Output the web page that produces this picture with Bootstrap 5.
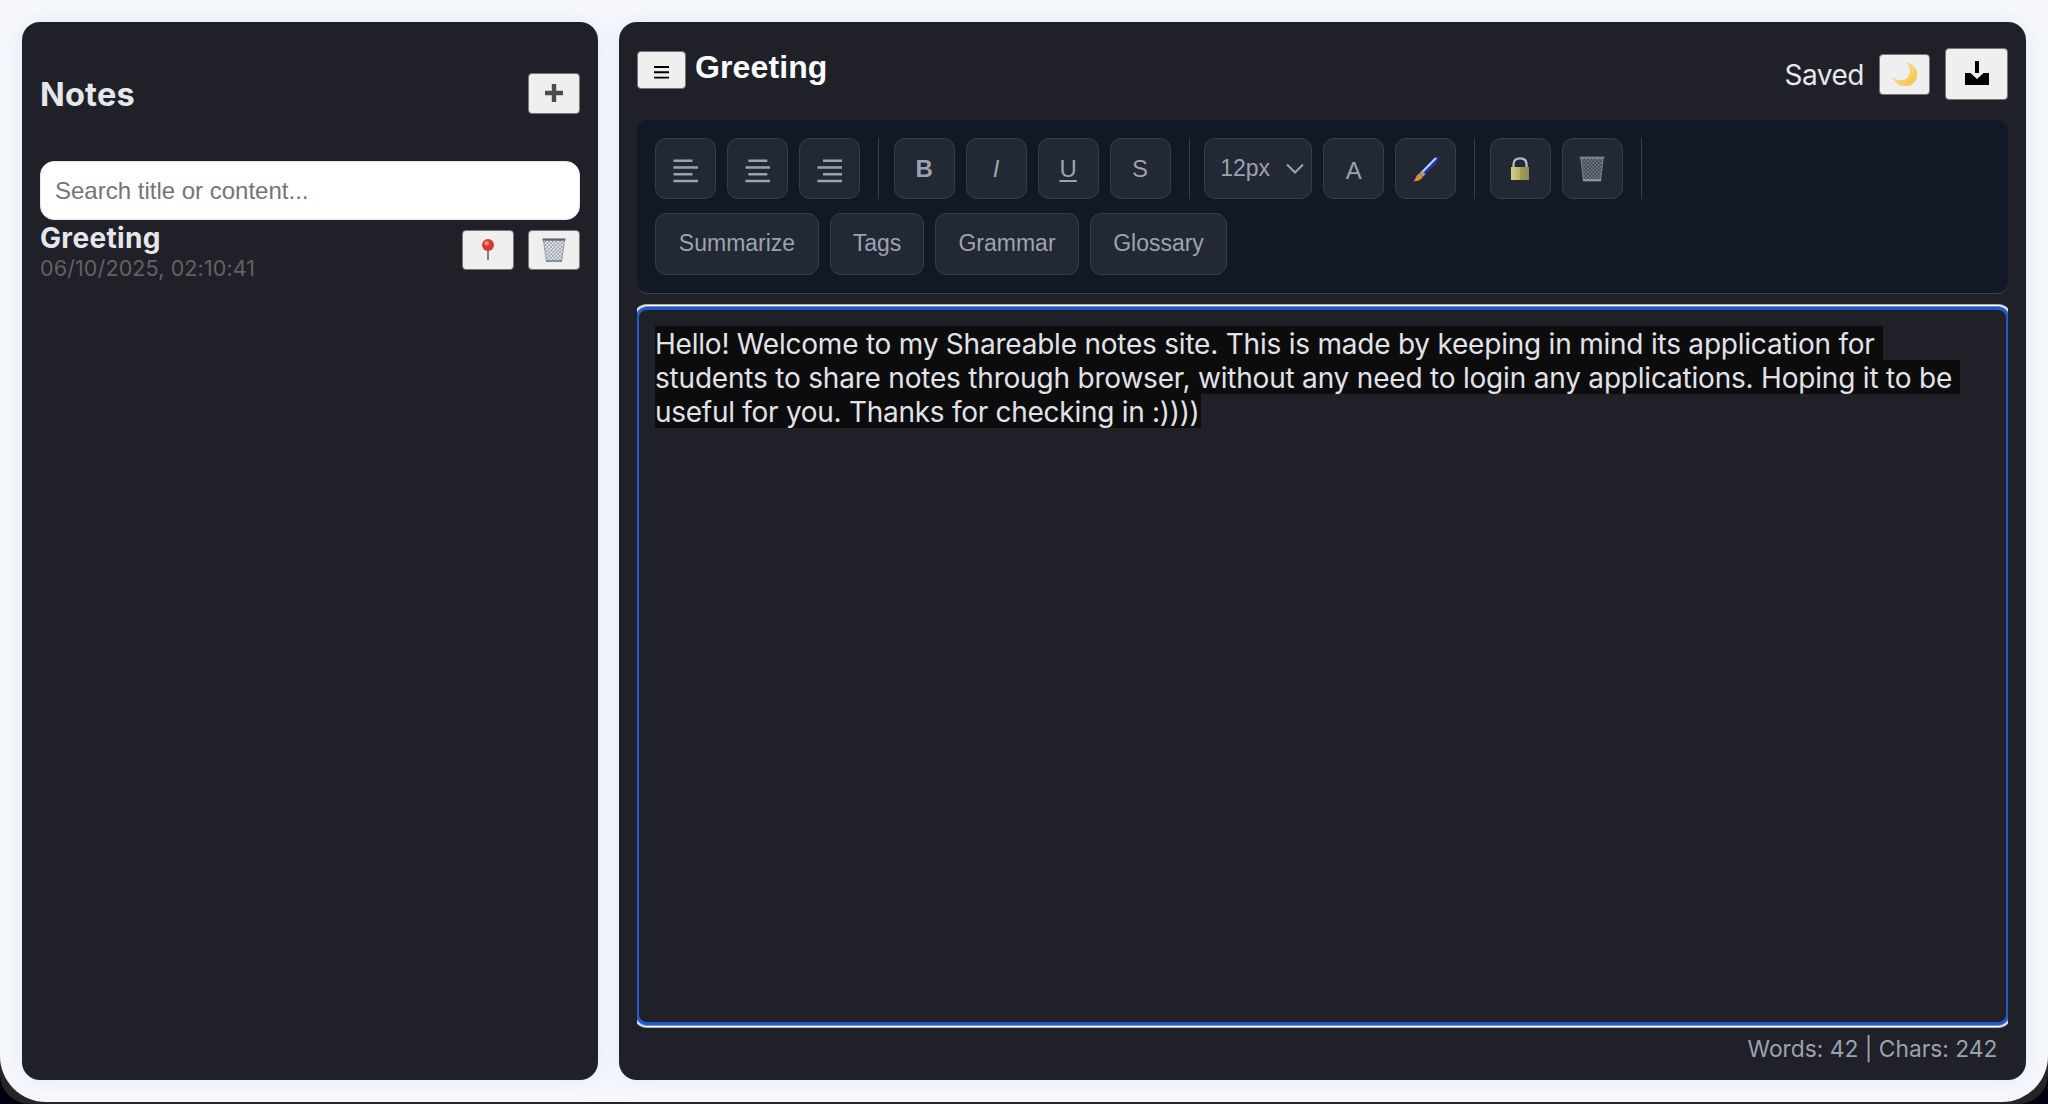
<!DOCTYPE html>
<html lang="en">
<head>
<meta charset="utf-8">
<title>Notes</title>
<link rel="stylesheet" href="https://cdn.jsdelivr.net/npm/bootstrap@5.3.0/dist/css/bootstrap.min.css">
<style>
html{background:#05000f}
body{height:1104px;margin:0;background:#242625;border-radius:0 0 30px 30px;font-family:Inter,"Liberation Sans",sans-serif;color:#e5e7eb;overflow:hidden}
svg{display:block;flex:none}
.screen{height:1102px;padding:22px;gap:21px;background:#f7f8fc;border-radius:0 0 46px 46px}
.panel{background:#202028;border-radius:18px;box-shadow:0 0 22px rgba(90,130,230,.13)}
.side{width:576px;padding:0 18px}
.main-pane{padding:18px 18px 0;min-width:0}
.arial{font-family:"Liberation Sans",Arial,sans-serif}
.side-head{height:139px;padding-top:51px}
.side-head h2{font-size:32.5px;font-weight:700;line-height:43px;letter-spacing:.2px;margin:0}
.plain{display:flex;align-items:center;justify-content:center;background:#efefef;border:1.5px solid #767676;border-radius:4px;padding:0;color:#000}
.b-add{width:52px;height:41px}
.b-item{width:52px;height:40px;margin-top:10px}
.b-menu{width:48.5px;height:38px;margin-top:11px}
.b-moon{width:51px;height:41px}
.b-save{width:63px;height:52px}
.search{height:59px;border:1px solid #e5e7eb;border-radius:14px;padding:0 14px;font-size:24px;background:#fff;width:100%;display:block}
.search::placeholder{color:#757575;opacity:1}
.note-title{font-size:28px;font-weight:700;line-height:34px;letter-spacing:.35px;margin-top:1px}
.note-date{font-size:21.5px;line-height:26px;letter-spacing:.12px;color:#626262}
.item-actions{gap:14px}
.head{height:80px}
.doc-title{font-size:32px;font-weight:700;line-height:36px;letter-spacing:.12px;color:#fff;margin:9px 0 0 9.5px}
.head-right{gap:15px;height:52px;margin-top:8px}
.saved{font-size:28px;line-height:34px;letter-spacing:-.5px;padding-top:2px}
.tools{height:174px;padding:18px;background:#121826;border-bottom:1px solid #3b424d;border-radius:11px;column-gap:11px;row-gap:14px;align-content:flex-start}
.tool{height:61px;width:61px;border:1px solid #373e4b;border-radius:11px;background:#222834;color:#9ca3af;font-size:24px;display:flex;align-items:center;justify-content:center;padding:0}
.tool u{text-underline-offset:3px;text-decoration-thickness:2px}
.tool-size{width:108px;font-size:23px;justify-content:space-between;padding:0 7px 0 15px}
.tool-word{height:62px;font-size:23px;padding:0 0 1px}
.w-sum{width:164px}
.w-tag{width:94px}
.w-gra{width:144px}
.w-glo{width:137px}
.rule-v{width:1px;height:61px;background:#373e4b;margin:0 3.6px 0 7px}
.break-line{width:160px}
.ed-clip{margin-top:10px;height:724px;overflow:hidden}
.ed{height:718px;margin:3px -1px;border:3px solid #2359c6;border-radius:11px;box-shadow:0 0 0 1px #6c90dc,0 0 0 2px #fff,0 0 0 3px #b3afb5;padding:16px;font-size:28px}
.hl{background:#0c0c0c;width:fit-content;height:34px;line-height:36px;white-space:nowrap;color:#e2e3e8}
.hl-1{letter-spacing:-.22px;padding-right:8.5px}
.hl-2{letter-spacing:-.2px;padding-right:8px}
.hl-3{letter-spacing:-.28px;padding-right:1px}
.count{font-size:22.8px;line-height:28px;padding:7px 10.500px 0 0;color:#9ca3af}
</style>
</head>
<body>
<svg width="0" height="0" class="position-absolute" aria-hidden="true">
<defs>
<pattern id="mesh" width="3.6" height="3.6" patternUnits="userSpaceOnUse"><path d="M0 0L3.6 3.6M3.6 0L0 3.6" stroke="#8b929b" stroke-width=".75"/></pattern>
<pattern id="mesh-dim" width="3.6" height="3.6" patternUnits="userSpaceOnUse"><path d="M0 0L3.6 3.6M3.6 0L0 3.6" stroke="#7b828f" stroke-width=".8"/></pattern>
<linearGradient id="gold" x1="0" x2="1"><stop offset="0" stop-color="#d8cf88"/><stop offset=".5" stop-color="#b9b06c"/><stop offset=".52" stop-color="#a39c5e"/><stop offset="1" stop-color="#918a52"/></linearGradient>
<linearGradient id="moon" x1="0" y1="0" x2="1" y2="1"><stop offset=".3" stop-color="#fbe27d"/><stop offset="1" stop-color="#eebf45"/></linearGradient>
</defs>
</svg>
<div class="screen d-flex">
  <aside class="panel side flex-shrink-0">
    <div class="side-head d-flex justify-content-between">
      <h2>Notes</h2>
      <button class="plain b-add" aria-label="Add"><svg width="18" height="20" viewBox="0 0 18 20"><path d="M9 0v18M0 9h18" stroke="#4b4b4b" stroke-width="4.4"/></svg></button>
    </div>
    <input class="search arial" placeholder="Search title or content...">
    <div class="d-flex justify-content-between">
      <div>
        <div class="note-title">Greeting</div>
        <div class="note-date">06/10/2025, 02:10:41</div>
      </div>
      <div class="item-actions d-flex">
        <button class="plain b-item" aria-label="Pin"><svg width="14" height="24" viewBox="0 0 14 24"><path d="M7 11v11" stroke="#8a7f7c" stroke-width="2"/><circle cx="7" cy="7" r="6" fill="#d23b33"/><circle cx="5.7" cy="5.2" r="2.2" fill="#f08a80"/></svg></button>
        <button class="plain b-item" aria-label="Delete"><svg width="24" height="25" viewBox="0 0 24 25"><path d="M1.5 2H22.5L19.7 23H4.3Z" fill="#e8eaec"/><path d="M1.5 2H22.5L19.7 23H4.3Z" fill="url(#mesh)" stroke="#99a3ad" stroke-width="1.1"/><path d="M.5 1.5H23.5" stroke="#5d6873" stroke-width="2.2"/><path d="M4 23H20" stroke="#7d93a8" stroke-width="2"/></svg></button>
      </div>
    </div>
  </aside>
  <main class="panel main-pane flex-grow-1">
    <div class="head d-flex align-items-start">
      <button class="plain b-menu" aria-label="Menu"><svg width="15" height="13" viewBox="0 0 15 13" style="margin-top:4px"><path d="M0 1h15M0 6.3h15M0 11.6h15" stroke="#000" stroke-width="1.9"/></svg></button>
      <div class="doc-title arial">Greeting</div>
      <div class="head-right d-flex align-items-center ms-auto">
        <span class="saved">Saved</span>
        <button class="plain b-moon" aria-label="Theme"><svg width="24" height="24" viewBox="0 0 24 24"><path d="M14.5.7C20 2.5 24 7 24 12.5C24 19 19 24 12.5 24C7 24 2.5 21 .3 16C6 20.5 13 18.5 15.7 14.5C18 11 18 5 14.5.7Z" fill="url(#moon)" stroke="#e9c658" stroke-width=".5"/></svg></button>
        <button class="plain b-save" aria-label="Download"><svg width="24" height="28" viewBox="0 0 24 28"><path d="M10 1h4v12h-4zM0 13h5.5l6.5 6 6.5-6H24v12H0z" fill="#000"/></svg></button>
      </div>
    </div>
    <div class="tools arial d-flex flex-wrap">
      <button class="tool" aria-label="Left"><svg width="25" height="28" viewBox="0 0 25 28"><path d="M.5 5.700h19M.5 12.500h24.500M.5 19.300h19M.5 26.100h24.500" stroke="#9ca3af" stroke-width="2.5"/></svg></button>
      <button class="tool" aria-label="Center"><svg width="25" height="28" viewBox="0 0 25 28"><path d="M3.300 5.700h19M.5 12.500h24.500M3.300 19.300h19M.5 26.100h24.500" stroke="#9ca3af" stroke-width="2.5"/></svg></button>
      <button class="tool" aria-label="Right"><svg width="25" height="28" viewBox="0 0 25 28"><path d="M6 5.700h19M.5 12.500h24.500M6 19.300h19M.5 26.100h24.500" stroke="#9ca3af" stroke-width="2.5"/></svg></button>
      <div class="rule-v"></div>
      <button class="tool fw-bold">B</button>
      <button class="tool fst-italic">I</button>
      <button class="tool"><u>U</u></button>
      <button class="tool">S</button>
      <div class="rule-v"></div>
      <button class="tool tool-size">12px<svg width="18" height="12" viewBox="0 0 18 12"><path d="M1 1.5L9 9.5L17 1.5" fill="none" stroke="#9ca3af" stroke-width="2"/></svg></button>
      <button class="tool pt-1">A</button>
      <button class="tool" aria-label="Highlight"><svg width="26" height="26" viewBox="0 0 26 26"><path d="M25.3.8C26 3 25 5.500 22 8.500L12.500 18.300L8.700 14.600L18 5C21 2 23.500.5 25.300.8Z" fill="#2036a8"/><path d="M10.300 15L22.500 2.600" stroke="#b9cdfb" stroke-width="2.200" stroke-linecap="round"/><path d="M8.700 14.600l3.800 3.700-2.500 2.500-3.800-3.300z" fill="#9ba0a6"/><path d="M6.200 17.400l3.700 3.400C8.500 24 4.500 25.300.5 25.300C2.500 23.500 2.700 19 6.200 17.400z" fill="#db8f35"/></svg></button>
      <div class="rule-v"></div>
      <button class="tool" aria-label="Lock"><svg width="20" height="26" viewBox="0 0 20 26"><path d="M3.500 12V8.500C3.500 4.500 6 2.300 10 2.300S16.500 4.500 16.500 8.500V12" fill="none" stroke="#b3bdc9" stroke-width="2.3"/><path d="M1 11h18v13H1z" fill="url(#gold)"/></svg></button>
      <button class="tool" aria-label="Clear"><svg width="26" height="26" viewBox="0 0 26 26"><path d="M2 2H24L21.5 24.5H4.5Z" fill="#3d444f"/><path d="M2 2H24L21.5 24.5H4.5Z" fill="url(#mesh-dim)" stroke="#767e8a" stroke-width="1.2"/><path d="M.7 1.7H25.3" stroke="#7b838e" stroke-width="2.2"/><path d="M4 24.3H22" stroke="#8d9db5" stroke-width="2"/></svg></button>
      <div class="rule-v"></div>
      <div class="break-line"></div>
      <button class="tool tool-word w-sum">Summarize</button>
      <button class="tool tool-word w-tag">Tags</button>
      <button class="tool tool-word w-gra">Grammar</button>
      <button class="tool tool-word w-glo">Glossary</button>
    </div>
    <div class="ed-clip">
      <div class="ed">
        <div class="hl hl-1">Hello! Welcome to my Shareable notes site. This is made by keeping in mind its application for</div>
        <div class="hl hl-2">students to share notes through browser, without any need to login any applications. Hoping it to be</div>
        <div class="hl hl-3">useful for you. Thanks for checking in :))))</div>
      </div>
    </div>
    <div class="count text-end">Words: 42 | Chars: 242</div>
  </main>
</div>
<script src="https://cdn.jsdelivr.net/npm/bootstrap@5.3.0/dist/js/bootstrap.bundle.min.js"></script>
</body>
</html>
